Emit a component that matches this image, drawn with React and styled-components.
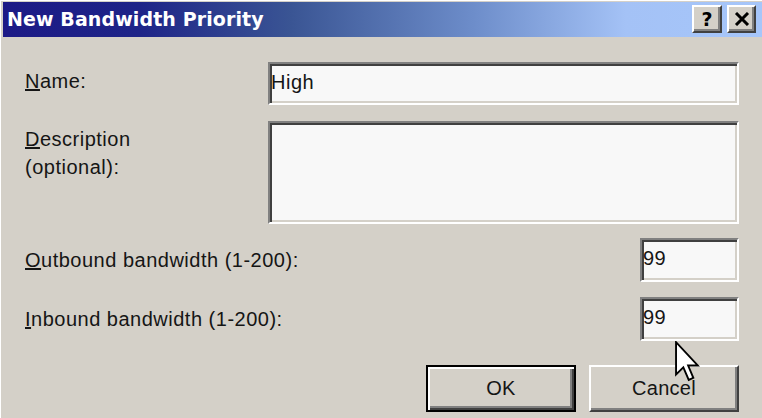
import React from 'react'
import styled, { createGlobalStyle } from 'styled-components'

const GlobalStyle = createGlobalStyle`
  html, body {
    margin: 0;
    padding: 0;
    background: #d4d0c8;
  }
  body {
    font-family: 'Liberation Sans', Arial, sans-serif;
  }
`

const Window = styled.div`
  position: relative;
  width: 762px;
  height: 418px;
  box-sizing: border-box;
  padding: 2px 0 0 3px;
  background: #d4d0c8;
  box-shadow: inset 1px 1px 0 #ffffff;
  overflow: hidden;
`

const TitleBar = styled.div`
  display: flex;
  justify-content: space-between;
  align-items: flex-start;
  height: 35px;
  padding: 0 6px 0 4px;
  background: linear-gradient(
    to right,
    #1c1a86 0%,
    #1e2488 18%,
    #3a5594 38%,
    #6d8dca 62%,
    #a4c2f6 82%,
    #a6c6fa 100%
  );
`

const Title = styled.span`
  font-family: 'DejaVu Sans', Verdana, sans-serif;
  font-weight: bold;
  font-size: 19px;
  line-height: 35px;
  letter-spacing: 0.1px;
  color: #ffffff;
`

const CaptionButtons = styled.div`
  display: flex;
  gap: 5px;
  padding-top: 3px;
`

const CaptionButton = styled.div`
  display: flex;
  align-items: center;
  justify-content: center;
  width: ${(p) => p.$w}px;
  height: 28px;
  box-sizing: border-box;
  background: #d4d0c8;
  border: 2px solid;
  border-color: #ffffff #404040 #404040 #ffffff;
  box-shadow: inset -2px -2px 0 #808080;
  font-family: 'DejaVu Sans', Verdana, sans-serif;
  font-weight: bold;
  font-size: 19px;
  color: #000;
`

const Body = styled.div`
  display: flex;
  flex-direction: column;
  padding: 25px 23px 0 22px;
`

const FieldRow = styled.div`
  display: grid;
  grid-template-columns: 243px 1fr;
  align-items: start;
  margin-bottom: ${(p) => p.$gap || 0}px;
`

const BandRow = styled.div`
  display: flex;
  justify-content: space-between;
  align-items: center;
  margin-bottom: ${(p) => p.$gap || 0}px;
`

const Label = styled.label`
  font-size: 20px;
  letter-spacing: 0.5px;
  line-height: ${(p) => p.$lh || 25}px;
  color: #151515;
  padding-top: ${(p) => p.$top || 0}px;
`

const TextBox = styled.div`
  box-sizing: border-box;
  width: ${(p) => (p.$w ? `${p.$w}px` : '100%')};
  height: ${(p) => p.$h}px;
  padding: 6px 4px 0 1px;
  background: #f8f8f8;
  border: 2px solid;
  border-color: #808080 #ffffff #ffffff #808080;
  box-shadow: inset 2px 2px 0 #404040, inset -2px -2px 0 #d4d0c8;
  font-size: 20px;
  letter-spacing: 0.5px;
  line-height: 25px;
  color: #151515;
`

const ButtonRow = styled.div`
  display: flex;
  justify-content: flex-end;
  gap: 13px;
`

const Button = styled.button`
  box-sizing: border-box;
  width: 150px;
  height: 47px;
  padding: 0;
  background: #d4d0c8;
  font-family: 'Liberation Sans', Arial, sans-serif;
  font-size: 20px;
  letter-spacing: 0.3px;
  color: #151515;
  border: 2px solid;
  border-color: ${(p) => (p.$default ? '#000' : '#ffffff #404040 #404040 #ffffff')};
  box-shadow: ${(p) =>
    p.$default
      ? 'inset 2px 2px 0 #ffffff, inset -2px -2px 0 #404040, inset -4px -4px 0 #808080'
      : 'inset -2px -2px 0 #808080, inset 2px 2px 0 #d4d0c8'};
`

const Pointer = styled.svg`
  position: absolute;
  left: 675px;
  top: 341px;
`

const App = () => {
  return (
    <>
      <GlobalStyle />
      <Window>
        <TitleBar>
          <Title>New Bandwidth Priority</Title>
          <CaptionButtons>
            <CaptionButton $w={30}>?</CaptionButton>
            <CaptionButton $w={29}>
              <svg width="16" height="14" viewBox="0 0 16 14">
                <path d="M2 1 L14 13 M14 1 L2 13" stroke="#000" strokeWidth="3" />
              </svg>
            </CaptionButton>
          </CaptionButtons>
        </TitleBar>

        <Body>
          <FieldRow $gap={16}>
            <Label $top={7}>
              <u>N</u>ame:
            </Label>
            <TextBox $h={43}>High</TextBox>
          </FieldRow>

          <FieldRow $gap={14}>
            <Label $top={4} $lh={28}>
              <u>D</u>escription
              <br />
              (optional):
            </Label>
            <TextBox $h={103} />
          </FieldRow>

          <BandRow $gap={15}>
            <Label>
              <u>O</u>utbound bandwidth (1-200):
            </Label>
            <TextBox $w={99} $h={44}>
              99
            </TextBox>
          </BandRow>

          <BandRow $gap={24}>
            <Label>
              <u>I</u>nbound bandwidth (1-200):
            </Label>
            <TextBox $w={99} $h={44}>
              99
            </TextBox>
          </BandRow>

          <ButtonRow>
            <Button $default>OK</Button>
            <Button>Cancel</Button>
          </ButtonRow>
        </Body>

        {/* mouse pointer resting over the Cancel button */}
        <Pointer width="25" height="42" viewBox="0 0 12 20">
          <path
            d="M0.5 0.5 L0.5 16 L4 12.6 L6.6 18.6 L8.8 17.6 L6.3 11.7 L11 11.7 Z"
            fill="#fff"
            stroke="#000"
            strokeWidth="0.9"
            strokeLinejoin="miter"
          />
        </Pointer>
      </Window>
    </>
  )
}

export default App
